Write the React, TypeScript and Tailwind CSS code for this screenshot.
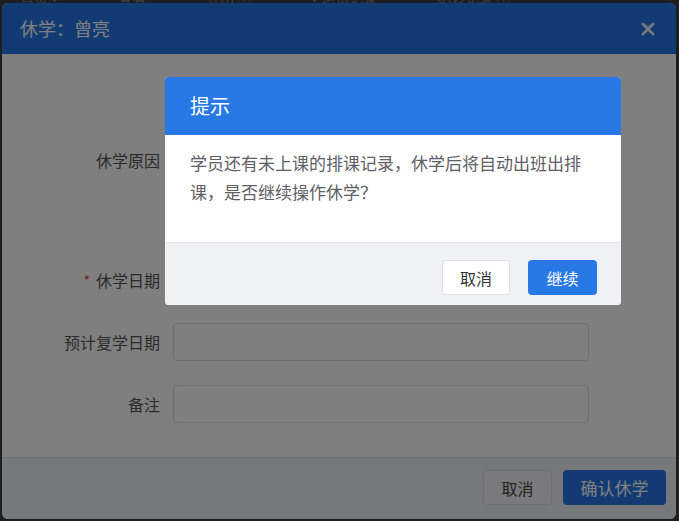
import { X } from 'lucide-react';

const font = { fontFamily: '"Noto Sans CJK SC", "Noto Sans", sans-serif' };

function Field({ label, required }: { label: string; required?: boolean }) {
  return (
    <div className="flex items-start">
      <div className="flex h-[38px] w-[171px] items-center justify-end pr-[13px] text-[16px] text-[#55575b]">
        {required && <span className="mr-[6px] text-[14px] text-[#f03a3a]">*</span>}
        {label}
      </div>
      <div className="h-[38px] w-[416px] rounded-[4px] border border-[#dcdfe6] bg-white" />
    </div>
  );
}

function App() {
  return (
    <div className="relative h-[521px] w-[679px] overflow-hidden bg-[#3a3c40]" style={font}>
      {/* page behind, only a sliver shows */}
      <div className="h-[3px] overflow-hidden">
        <div className="-mt-[13px] flex gap-[60px] pl-[20px] text-[14px] text-[#7a7a7a]">
          <span>首页 ▾</span>
          <span>查看</span>
          <span>导出 ⓘ</span>
          <span>▾ 退费记录</span>
          <span>结转记录 ⓘ</span>
        </div>
      </div>

      {/* 休学 dialog */}
      <div className="ml-[2px] flex h-[516px] w-[674px] flex-col overflow-hidden rounded-[6px] bg-white">
        <div className="flex h-[51px] items-center justify-between bg-[#2777e6] pl-[18px] pr-[18px]">
          <span className="text-[18px] text-white">休学：曾亮</span>
          <X size={20} strokeWidth={3.2} className="text-[#f2f4f8]" />
        </div>

        <div className="flex flex-col gap-[24px] pb-[34px] pt-[87px]">
          <div className="flex items-start">
            <div className="mt-[1px] flex h-[36px] w-[171px] items-center justify-end pr-[13px] text-[16px] text-[#55575b]">
              休学原因
            </div>
            <div className="h-[96px] w-[416px] rounded-[4px] border border-[#dcdfe6] bg-white" />
          </div>
          <Field label="休学日期" required />
          <Field label="预计复学日期" />
          <Field label="备注" />
        </div>

        <div className="flex flex-1 items-start justify-end gap-[11px] border-t border-[#dfe0e4] bg-[#eff0f4] pr-[10px] pt-[12px]">
          <button className="h-[35px] w-[69px] rounded-[4px] border border-[#dcdfe6] bg-[#f4f5f8] text-[16px] text-[#444]">
            取消
          </button>
          <button className="h-[35px] w-[103px] rounded-[4px] bg-[#2777e6] text-[17px] text-white">
            确认休学
          </button>
        </div>
      </div>

      {/* mask */}
      <div className="absolute inset-0 bg-black/50" />

      {/* 提示 */}
      <div className="absolute left-[165px] top-[77px] w-[456px] overflow-hidden rounded-[4px] bg-white">
        <div className="flex h-[58px] items-center bg-[#2878e6] pl-[25px] text-[20px] text-white">提示</div>
        <div className="h-[107px] px-[25px] pt-[13px] text-[17px] leading-[29px] text-[#5e6065]">
          学员还有未上课的排课记录，休学后将自动出班出排课，是否继续操作休学？
        </div>
        <div className="flex h-[63px] items-start justify-end gap-[18px] border-t border-[#e1e3e8] bg-[#eff1f5] pr-[24px] pt-[17px]">
          <button className="h-[35px] w-[68px] rounded-[4px] border border-[#dcdfe6] bg-white text-[16px] text-[#333]">
            取消
          </button>
          <button className="h-[35px] w-[69px] rounded-[4px] bg-[#2878e6] text-[16px] text-white">继续</button>
        </div>
      </div>
    </div>
  );
}

export default App;
